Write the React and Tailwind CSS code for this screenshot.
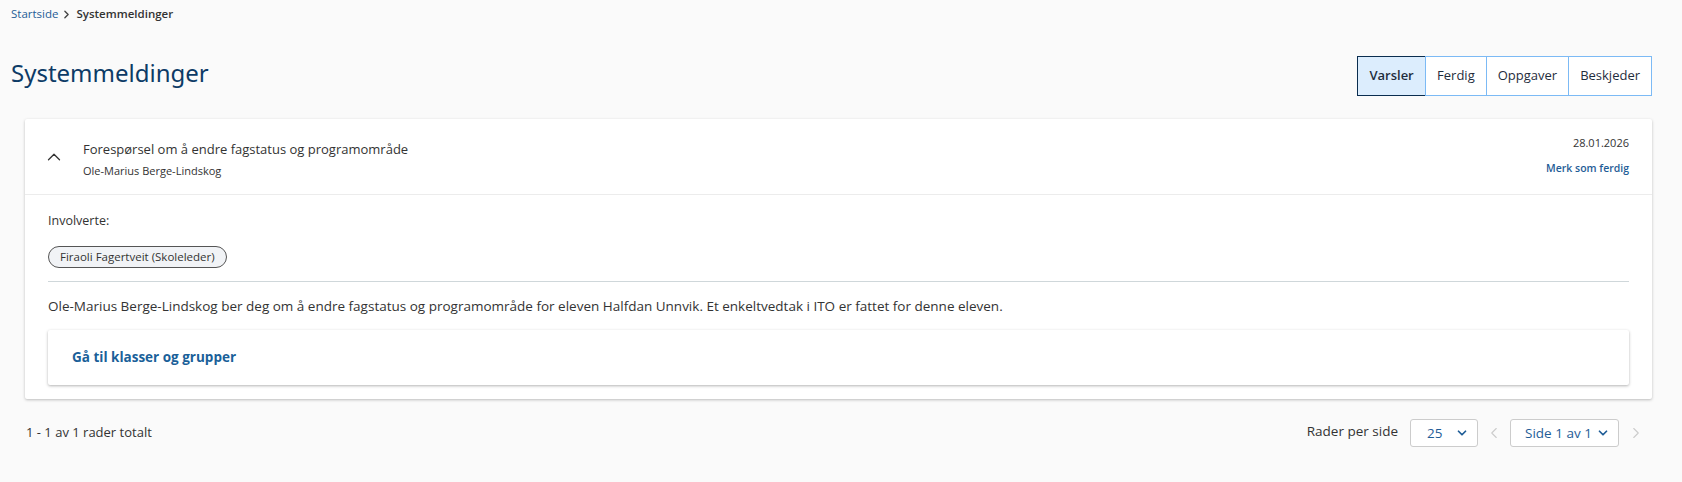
import React from "react";
import { ChevronUp, ChevronDown, ChevronLeft, ChevronRight } from "lucide-react";

const tabs = ["Varsler", "Ferdig", "Oppgaver", "Beskjeder"];

const App = () => {
  return (
    <div
      className="min-h-[482px] bg-[#fafafa] pl-[11px] pr-[30px] pt-[6px] text-[#333]"
      style={{ fontFamily: '"Open Sans", "Noto Sans", sans-serif' }}
    >
      {/* breadcrumb */}
      <div className="flex items-center h-[16px] text-[11.5px]">
        <a className="text-[#1f5d97]">Startside</a>
        <ChevronRight size={13} strokeWidth={2.5} className="text-[#444] ml-[2px] mr-[3px]" />
        <span className="font-semibold text-[#333]">Systemmeldinger</span>
      </div>

      {/* header */}
      <div className="flex justify-between items-center mt-[34px]">
        <h1 className="text-[24px] text-[#0d3b66] leading-none -mt-[6px]" style={{ fontFamily: '"Noto Sans", sans-serif' }}>
          Systemmeldinger
        </h1>
        <div className="flex">
          {tabs.map((t, i) => (
            <button
              key={t}
              className={
                i === 0
                  ? "h-[40px] w-[69px] border border-[#0a2d4f] bg-[#dcedfd] text-[13px] font-semibold text-[#1f2d3d]"
                  : "h-[40px] px-[11px] border border-[#7cbaf5] -ml-px bg-white text-[13px] text-[#1f2d3d]"
              }
            >
              {t}
            </button>
          ))}
        </div>
      </div>

      {/* card */}
      <div className="ml-[14px] mt-[23px] bg-white rounded-[2px] shadow-[0_1px_3px_rgba(0,0,0,0.25)]">
        <div className="flex justify-between h-[76px] border-b border-[#ececec] pl-[18px] pr-[23px]">
          <div className="flex items-center">
            <ChevronUp size={22} strokeWidth={1.4} className="text-[#333] mt-[1px]" />
            <div className="ml-[18px] mt-[5px]">
              <div className="text-[13px] leading-[18px] text-[#333]">
                Forespørsel om å endre fagstatus og programområde
              </div>
              <div className="text-[11px] leading-[16px] mt-[5px] text-[#333]">
                Ole-Marius Berge-Lindskog
              </div>
            </div>
          </div>
          <div className="flex flex-col items-end pt-[16px]">
            <div className="text-[11px] leading-[16px] text-[#333]">28.01.2026</div>
            <a className="text-[10.5px] leading-[16px] mt-[9px] font-semibold text-[#1f5d97]">Merk som ferdig</a>
          </div>
        </div>

        <div className="px-[23px] pt-[18px] pb-[14px]">
          <div className="text-[12.5px] leading-[16px]">Involverte:</div>
          <div className="mt-[17px] flex">
            <span className="h-[22px] px-[11px] rounded-full border border-[#555] bg-[#f1f3f6] text-[11.5px] flex items-center text-[#333]">
              Firaoli Fagertveit (Skoleleder)
            </span>
          </div>
          <div className="mt-[13px] border-t border-[#cfd7da]" />
          <p className="mt-[15px] text-[13.5px] leading-[18px] text-[#333]">
            Ole-Marius Berge-Lindskog ber deg om å endre fagstatus og programområde for eleven Halfdan Unnvik. Et enkeltvedtak i ITO er fattet for denne eleven.
          </p>
          <div className="mt-[15px] h-[55px] flex items-center px-[24px] bg-white rounded-[2px] shadow-[0_1px_3px_rgba(0,0,0,0.3)]">
            <a className="text-[13.5px] font-bold text-[#1a5f99]">Gå til klasser og grupper</a>
          </div>
        </div>
      </div>

      {/* footer */}
      <div className="flex justify-between items-center ml-[15px] mt-[20px]">
        <div className="text-[13px] text-[#333]">1 - 1 av 1 rader totalt</div>
        <div className="flex items-center pr-[7px]">
          <span className="text-[13.5px] text-[#333] -mt-[4px]">Rader per side</span>
          <div className="ml-[12px] h-[28px] w-[68px] border border-[#ccc] rounded-[3px] bg-white flex items-center justify-between pl-[16px] pr-[8px]">
            <span className="text-[13.5px] text-[#1f5d97]">25</span>
            <ChevronDown size={14} strokeWidth={3} className="text-[#1f5d97]" />
          </div>
          <ChevronLeft size={18} strokeWidth={1.5} className="text-[#ccc] mx-[7px]" />
          <div className="h-[28px] w-[109px] border border-[#ccc] rounded-[3px] bg-white flex items-center justify-between pl-[14px] pr-[8px]">
            <span className="text-[13.5px] text-[#1f5d97]">Side 1 av 1</span>
            <ChevronDown size={14} strokeWidth={3} className="text-[#1f5d97]" />
          </div>
          <ChevronRight size={18} strokeWidth={1.5} className="text-[#ccc] ml-[8px]" />
        </div>
      </div>
    </div>
  );
};

export default App;
